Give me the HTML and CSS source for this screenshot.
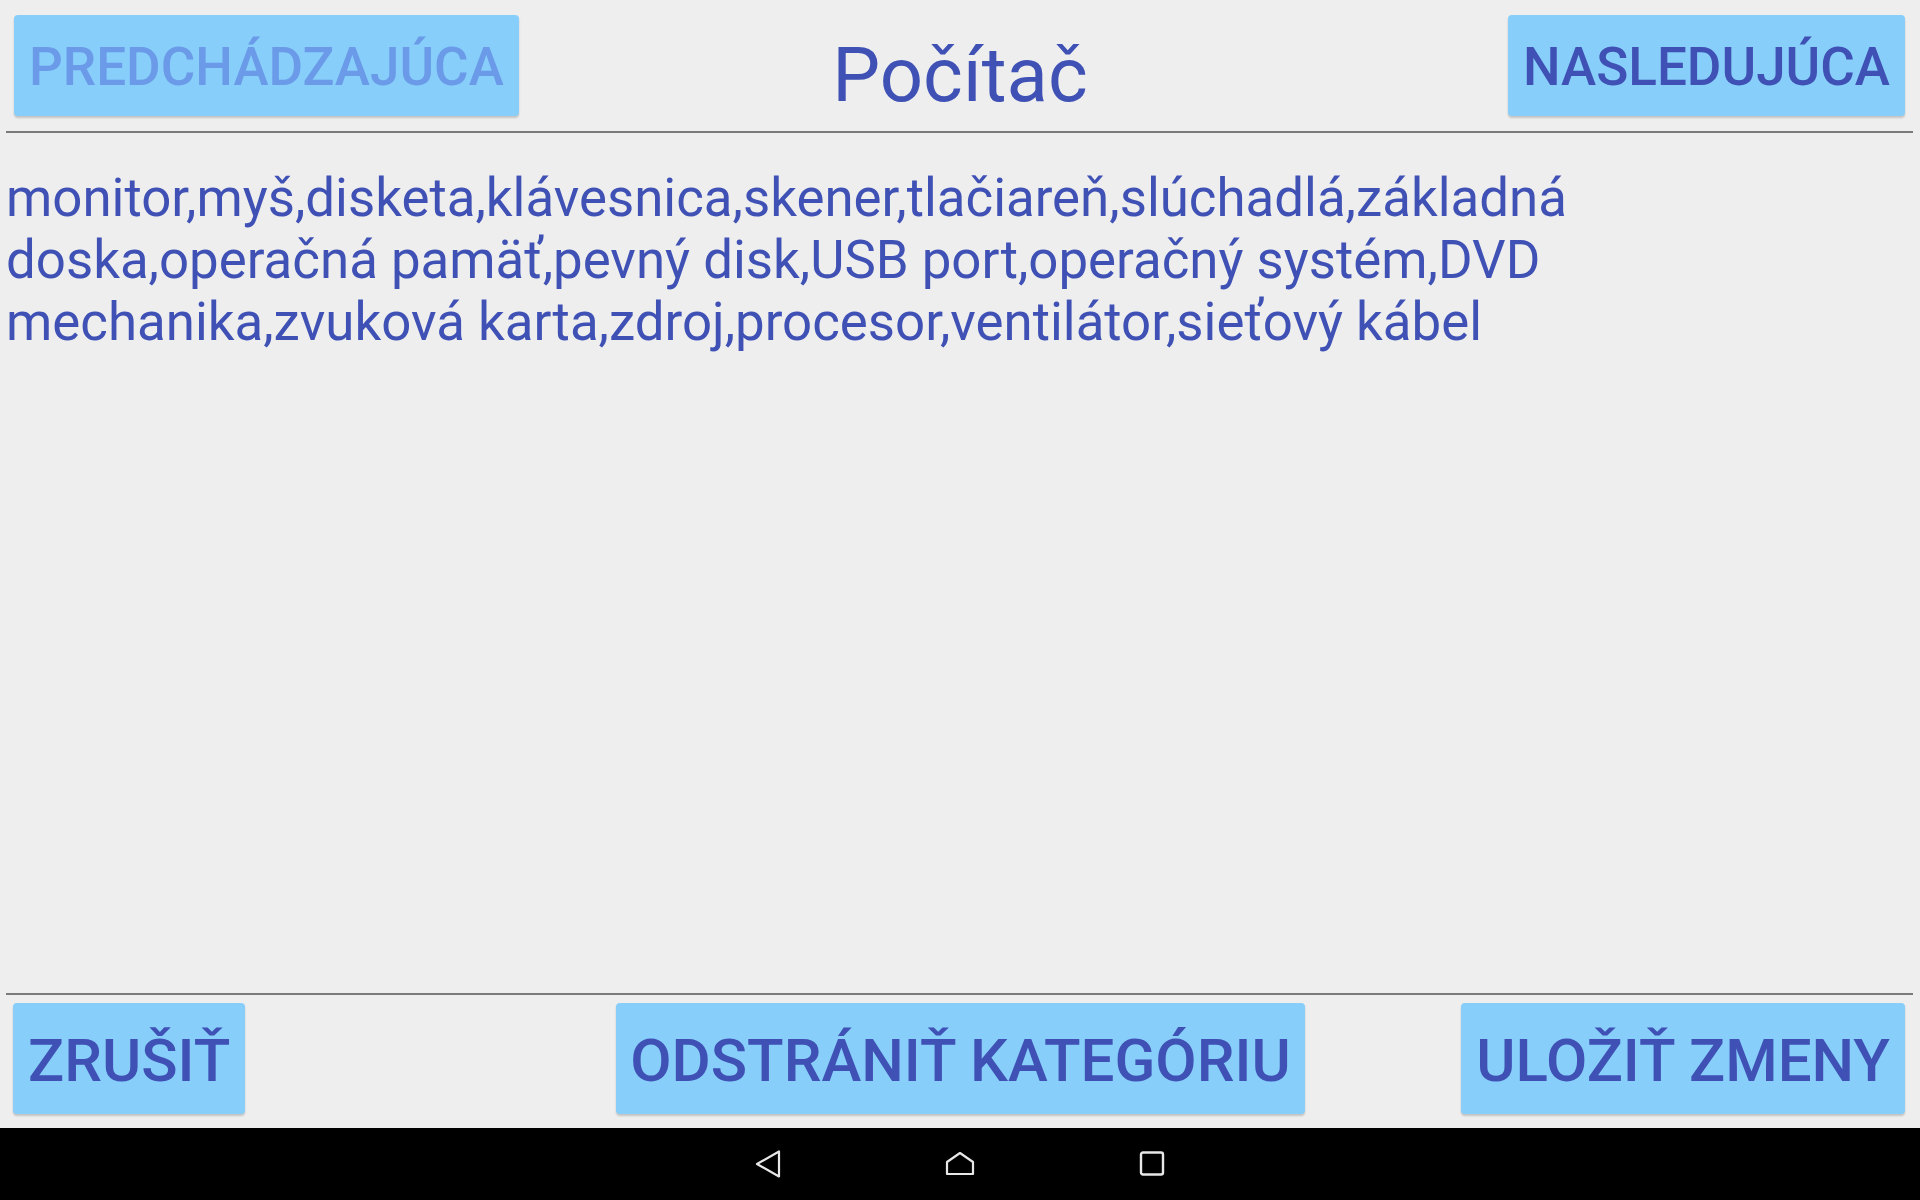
FILE: index.html
```html
<!DOCTYPE html>
<html lang="sk">
<head>
<meta charset="utf-8">
<title>Počítač</title>
<link rel="stylesheet" href="styles.css">
</head>
<body>
<div class="screen">
  <header class="top">
    <div class="top-left"><button class="btn btn-top btn-disabled">PREDCHÁDZAJÚCA</button></div>
    <h1 class="title">Počítač</h1>
    <div class="top-right"><button class="btn btn-top">NASLEDUJÚCA</button></div>
  </header>
  <div class="rule rule-top"></div>
  <main class="content">
    <p class="words">monitor,myš,disketa,klávesnica,skener,tlačiareň,slúchadlá,základná doska,operačná pamäť,pevný disk,USB port,operačný systém,DVD mechanika,zvuková karta,zdroj,procesor,ventilátor,sieťový kábel</p>
  </main>
  <div class="rule rule-bottom"></div>
  <footer class="bottom">
    <button class="btn btn-bottom btn-cancel">ZRUŠIŤ</button>
    <button class="btn btn-bottom btn-delete">ODSTRÁNIŤ KATEGÓRIU</button>
    <button class="btn btn-bottom btn-save">ULOŽIŤ ZMENY</button>
  </footer>
  <nav class="navbar">
    <svg class="nav-icon" width="30" height="30" viewBox="0 0 30 30"><path d="M26 2.5 L26 27.5 L4 15 Z" fill="none" stroke="#e8e8e8" stroke-width="2.2" stroke-linejoin="round"/></svg>
    <svg class="nav-icon" width="30" height="30" viewBox="0 0 30 30"><path d="M2 13 L15 4 L28 13 L28 25 L2 25 Z" fill="none" stroke="#e8e8e8" stroke-width="2.2" stroke-linejoin="round"/></svg>
    <svg class="nav-icon" width="30" height="30" viewBox="0 0 30 30"><rect x="4" y="3.5" width="22" height="22" rx="2" fill="none" stroke="#e8e8e8" stroke-width="2.4"/></svg>
  </nav>
</div>
</body>
</html>
```

FILE: styles.css
```css
* { box-sizing: border-box; }
html, body { margin: 0; padding: 0; }
body {
  background: #eeeeee;
  font-family: Roboto, "Noto Sans", "Liberation Sans", sans-serif;
  color: #3f51b5;
}
.screen {
  width: 1920px;
  height: 1200px;
  display: flex;
  flex-direction: column;
}
.top {
  display: grid;
  grid-template-columns: 1fr auto 1fr;
  align-items: start;
  height: 131px;
}
.top-left { padding: 15px 0 0 14px; }
.top-right { display: flex; justify-content: flex-end; padding: 15px 15px 0 0; }
.title {
  margin: 0;
  padding-top: 37px;
  font-size: 76px;
  font-weight: 400;
  line-height: 1;
  color: #3f51b5;
}
.btn {
  font-family: Roboto, "Noto Sans", "Liberation Sans", sans-serif;
  font-weight: 500;
  color: #3f51b5;
  background: #87cefa;
  border: none;
  border-radius: 4px;
  box-shadow: 0 2px 2px rgba(0,0,0,0.18);
  padding: 0 15px;
  line-height: 1;
  white-space: nowrap;
}
.btn-top {
  height: 101px;
  font-size: 53px;
  padding-top: 4px;
}
.btn-disabled { color: #6a9ae8; }
.rule {
  height: 2px;
  background: #7a7a7a;
  margin: 0 7px 0 6px;
  flex: none;
}
.content {
  flex: 1;
  padding: 0 6px;
}
.words {
  margin: 0;
  padding-top: 34px;
  font-size: 52.8px;
  line-height: 62px;
  width: 1590px;
}
.bottom {
  display: flex;
  align-items: flex-start;
  height: 133px;
  padding: 8px 15px 0 13px;
}
.btn-bottom {
  height: 111px;
  font-size: 60px;
  padding-top: 4px;
}
.btn-delete { margin-left: 371px; padding: 4px 14px 0; }
.btn-save { margin-left: auto; }
.navbar {
  height: 72px;
  background: #000;
  display: flex;
  align-items: center;
  justify-content: center;
  gap: 162px;
  flex: none;
}
.nav-icon { display: block; }
```
